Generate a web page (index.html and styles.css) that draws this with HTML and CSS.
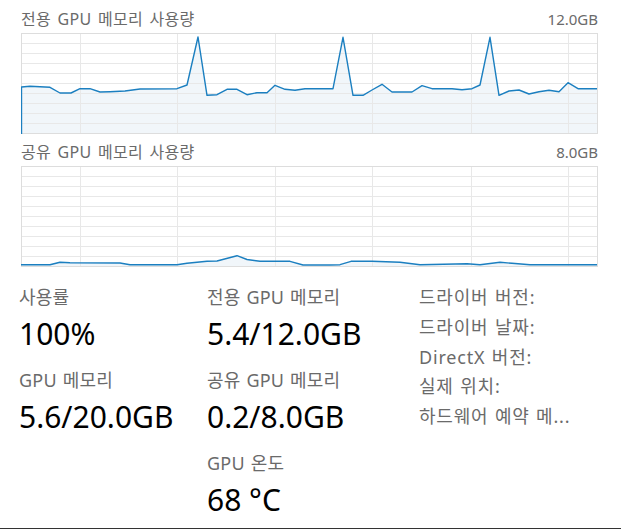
FILE: index.html
```html
<!DOCTYPE html>
<html lang="ko">
<head>
<meta charset="utf-8">
<title>GPU</title>
<link rel="stylesheet" href="styles.css">
</head>
<body>
<div class="page">
  <section class="chart">
    <div class="chart-head"><span class="chart-title">전용 GPU 메모리 사용량</span><span class="chart-max">12.0GB</span></div>
    <svg class="graph" width="577" height="101" viewBox="0 0 577 101">
      <polygon class="area" points="0,101 0,54 9,53.3 29,54.3 39,60 50,60 59,55.7 69,55.7 79,59 89,58.7 104,58 119,56 156,55.7 166,52 177,4 186,62.3 196,61.7 206,56.3 216,56.3 226,61.7 236,59.7 246,59.7 254,52.3 264,56.3 274,57.3 284,55.7 312,55.7 322,4.3 332,62.3 342,62.3 351,57 361,51.3 371,59 391,59 401,52.7 411,55.7 431,55.7 441,56.7 451,55.7 459,52 469,4.3 478,62.3 488,58 498,57 508,61 518,58.7 528,57.3 538,58.7 547,49.7 557,55.7 576,55.7 576,101"/>
      <path class="grid" d="M0 10.5H577M0 20.5H577M0 30.5H577M0 40.5H577M0 50.5H577M0 60.5H577M0 70.5H577M0 80.5H577M0 90.5H577M59.5 0V101M156.5 0V101M254.5 0V101M351.5 0V101M450.5 0V101M547.5 0V101"/>
      <rect class="frame" x="0.5" y="0.5" width="576" height="100"/>
      <polyline class="line" points="0.5,101 0.5,54 9,53.3 29,54.3 39,60 50,60 59,55.7 69,55.7 79,59 89,58.7 104,58 119,56 156,55.7 166,52 177,4 186,62.3 196,61.7 206,56.3 216,56.3 226,61.7 236,59.7 246,59.7 254,52.3 264,56.3 274,57.3 284,55.7 312,55.7 322,4.3 332,62.3 342,62.3 351,57 361,51.3 371,59 391,59 401,52.7 411,55.7 431,55.7 441,56.7 451,55.7 459,52 469,4.3 478,62.3 488,58 498,57 508,61 518,58.7 528,57.3 538,58.7 547,49.7 557,55.7 576,55.7"/>
    </svg>
  </section>
  <section class="chart">
    <div class="chart-head"><span class="chart-title">공유 GPU 메모리 사용량</span><span class="chart-max">8.0GB</span></div>
    <svg class="graph" width="577" height="101" viewBox="0 0 577 101">
      <polygon class="area" points="0,101 0,98.7 29,98.7 39,96.3 49,96.7 99,97 109,98.7 156,98.7 166,97.3 186,95.3 196,95 216,89.7 226,93.5 239,95.3 269,95.3 282,99 309,99 319,98.7 330,95.3 351,95.3 379,96.3 399,98.7 446,97.7 459,98.7 479,96.3 491,97.3 509,98.7 576,98.7 576,101"/>
      <path class="grid" d="M0 10.5H577M0 20.5H577M0 30.5H577M0 40.5H577M0 50.5H577M0 60.5H577M0 70.5H577M0 80.5H577M0 90.5H577M59.5 0V101M156.5 0V101M254.5 0V101M351.5 0V101M450.5 0V101M547.5 0V101"/>
      <rect class="frame" x="0.5" y="0.5" width="576" height="100"/>
      <polyline class="line" points="0,98.7 29,98.7 39,96.3 49,96.7 99,97 109,98.7 156,98.7 166,97.3 186,95.3 196,95 216,89.7 226,93.5 239,95.3 269,95.3 282,99 309,99 319,98.7 330,95.3 351,95.3 379,96.3 399,98.7 446,97.7 459,98.7 479,96.3 491,97.3 509,98.7 576,98.7"/>
    </svg>
  </section>
  <div class="stats">
    <div class="stat-col">
      <div class="stat"><div class="label">사용률</div><div class="value">100%</div></div>
      <div class="stat"><div class="label">GPU 메모리</div><div class="value">5.6/20.0GB</div></div>
    </div>
    <div class="stat-col">
      <div class="stat"><div class="label">전용 GPU 메모리</div><div class="value">5.4/12.0GB</div></div>
      <div class="stat"><div class="label">공유 GPU 메모리</div><div class="value">0.2/8.0GB</div></div>
      <div class="stat"><div class="label">GPU 온도</div><div class="value">68 °C</div></div>
    </div>
    <ul class="info">
      <li>드라이버 버전:</li>
      <li>드라이버 날짜:</li>
      <li>DirectX 버전:</li>
      <li>실제 위치:</li>
      <li>하드웨어 예약 메...</li>
    </ul>
  </div>
</div>
</body>
</html>
```
FILE: styles.css
```css
* {
  box-sizing: border-box;
  margin: 0;
  padding: 0;
}

body {
  margin: 0;
  background: #ffffff;
  font-family: "Noto Sans", "Noto Sans CJK KR", sans-serif;
  color: #6a6a6a;
}

.page {
  height: 529px;
  padding: 1px 23px 0 21px;
  border-bottom: 1px solid #333333;
}

.chart-head {
  display: flex;
  justify-content: space-between;
  align-items: center;
  height: 32px;
  padding-top: 3px;
  font-size: 16px;
  line-height: 20px;
  word-spacing: 2px;
  color: #6a6a6a;
}

.chart-title {
  letter-spacing: 0.3px;
}

.chart-max {
  font-size: 15px;
}

.graph {
  display: block;
}

.graph .grid {
  stroke: #e8e8e8;
  stroke-width: 1;
  fill: none;
}

.graph .frame {
  fill: none;
  stroke: #dddddd;
  stroke-width: 1;
}

.graph .area {
  fill: #f1f6fa;
  stroke: none;
}

.graph .line {
  fill: none;
  stroke: #1b7fc0;
  stroke-width: 1.4;
  stroke-linejoin: round;
}

.stats {
  display: grid;
  grid-template-columns: 188px 212px 1fr;
  margin-left: -2px;
  padding-top: 18px;
}

.stat {
  margin-bottom: 11px;
}

.label {
  font-size: 18px;
  line-height: 24px;
  margin-bottom: 2px;
  color: #6a6a6a;
  word-spacing: 1px;
  letter-spacing: 0.2px;
}

.value {
  font-size: 30px;
  line-height: 46px;
  color: #000000;
}

.info {
  list-style: none;
  margin-top: -3px;
  font-size: 18px;
  line-height: 30px;
  color: #6a6a6a;
  word-spacing: 1px;
  letter-spacing: 0.8px;
}

.info li {
  height: 29.75px;
  white-space: nowrap;
}
```
